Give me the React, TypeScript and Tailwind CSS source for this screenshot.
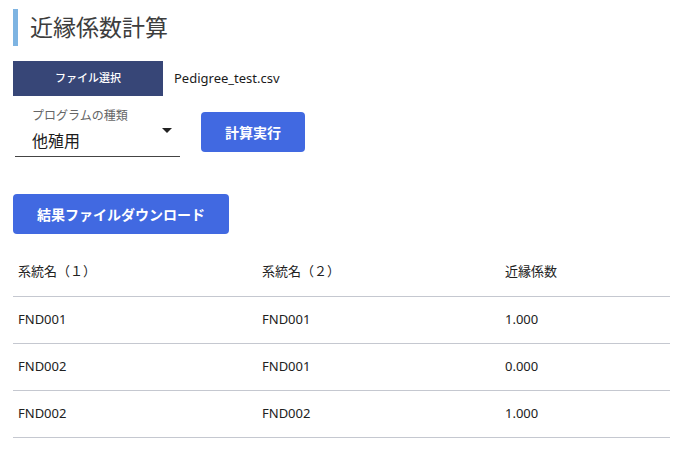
import React from "react";

const rows = [
  ["FND001", "FND001", "1.000"],
  ["FND002", "FND001", "0.000"],
  ["FND002", "FND002", "1.000"],
];

export default function App() {
  return (
    <div
      className="w-[678px] h-[456px] bg-white overflow-hidden px-[13px] pt-[9px] text-[#212121]"
      style={{ fontFamily: '"Noto Sans", "Noto Sans CJK JP", sans-serif' }}
    >
      <div className="flex items-center h-[37px] border-l-[5px] border-[#7eb4e2] pl-[12px]">
        <h1 className="text-[23px] leading-none text-[#3d3d3d] font-normal">近縁係数計算</h1>
      </div>

      <div className="flex items-center mt-[15px] h-[35px]">
        <button className="w-[150px] h-[35px] bg-[#374677] text-white text-[11px] font-medium">
          ファイル選択
        </button>
        <span className="ml-[11px] text-[13px] text-[#1b1b1b]">Pedigree_test.csv</span>
      </div>

      <div className="flex items-start mt-[12px]">
        <div className="relative w-[165px] ml-[2px] h-[49px] border-b border-[#444]">
          <div className="pl-[17px] pt-[2px] text-[12px] leading-none text-[#666]">プログラムの種類</div>
          <div className="pl-[17px] pt-[11px] text-[16px] leading-none text-[#1b1b1b]">他殖用</div>
          <div className="absolute right-[8px] top-[20px] w-0 h-0 border-l-[5px] border-r-[5px] border-t-[5px] border-l-transparent border-r-transparent border-t-[#222]" />
        </div>
        <button className="ml-[21px] mt-[4px] w-[104px] h-[40px] rounded-[4px] bg-[#4169e1] text-white text-[14px] font-bold">
          計算実行
        </button>
      </div>

      <button className="mt-[37px] w-[216px] h-[40px] rounded-[4px] bg-[#4169e1] text-white text-[14px] font-bold">
        結果ファイルダウンロード
      </button>

      <table className="mt-[14px] w-[657px] border-collapse text-[13px]">
        <thead>
          <tr className="h-[48px] border-b border-[#c5c8d0]">
            <th className="w-[244px] pl-[5px] text-left font-normal">系統名（１）</th>
            <th className="w-[243px] pl-[5px] text-left font-normal">系統名（２）</th>
            <th className="pl-[5px] text-left font-normal">近縁係数</th>
          </tr>
        </thead>
        <tbody>
          {rows.map((r, i) => (
            <tr key={i} className="h-[47px] border-b border-[#c5c8d0]">
              {r.map((c, j) => (
                <td key={j} className="pl-[5px]">{c}</td>
              ))}
            </tr>
          ))}
        </tbody>
      </table>
    </div>
  );
}
